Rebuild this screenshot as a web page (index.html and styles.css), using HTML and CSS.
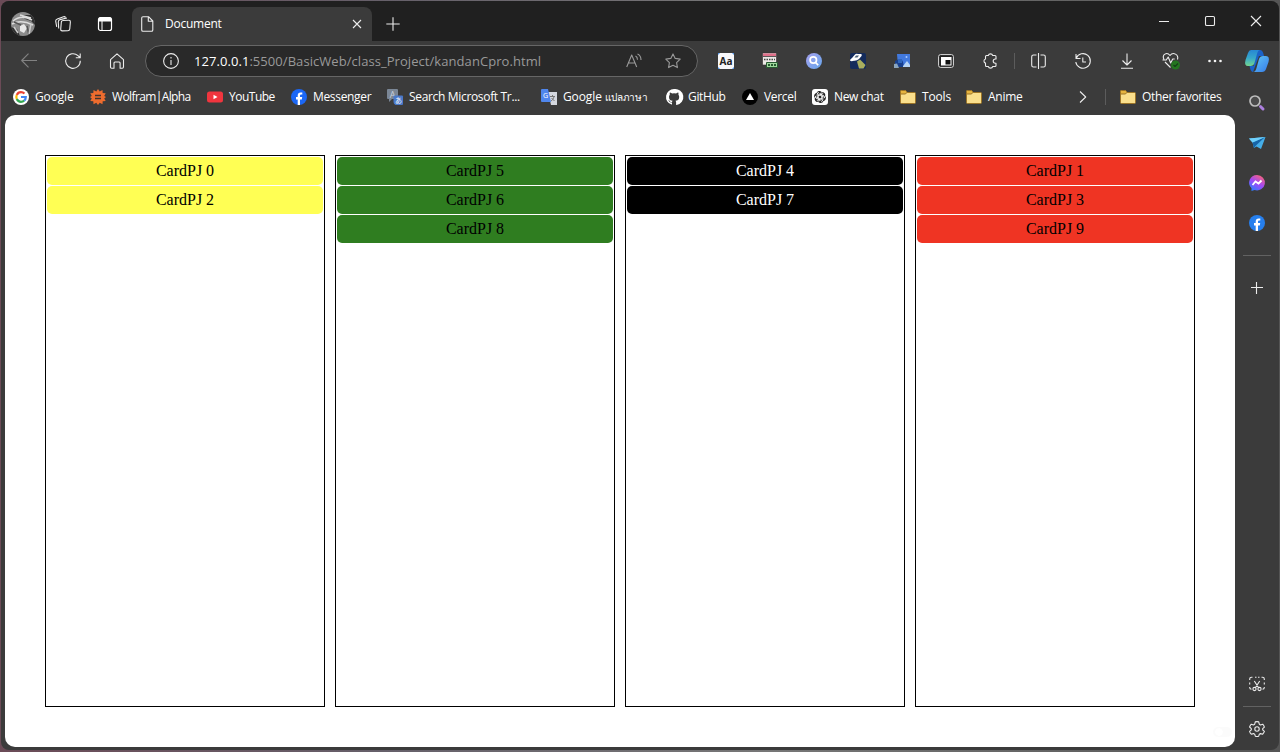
FILE: index.html
```html
<!DOCTYPE html>
<html lang="en">
<head>
<meta charset="utf-8">
<title>Document</title>
<link rel="stylesheet" href="styles.css">
</head>
<body>
<div class="window">
  <header class="titlebar">
    <svg class="avatar" viewBox="0 0 24 24"><defs><clipPath id="av"><circle cx="12" cy="12" r="12"/></clipPath></defs><g clip-path="url(#av)"><path fill="#8c8c8c" d="M0 0h24v24H0z"/><path fill="#303030" d="M13 3h11v10l-4-4-6-2-4-3zM0 15l6 2 3 7H0z"/><path stroke="#ddd" stroke-width="1.500" fill="none" d="M2 9q8-7 19-1M1 12q9-5 21 1M9 3l11 3"/><path fill="#e8e8e8" d="M9 14l4-2 3 4-3 5-4-2z"/><path stroke="#555" stroke-width="1.500" fill="none" d="M3 10l7 3M16 14l2 9"/><path stroke="#ccc" stroke-width="1.500" d="M20 12l-2 10M3 15l4 6"/></g></svg>
    <span class="tb-btn"><svg class="i16 line" viewBox="0 0 16 16"><rect x="6" y="4.500" width="9" height="10.500" rx="1.700" transform="rotate(5 11 10) skewY(-6) translate(0 1)"/><path d="M3.700 12.500L3.300 6q0-2 1.700-2.400l7-1.600M1.700 10.800L.7 5.200Q.4 3.600 2.300 2.900L8.500.7q1.500-.4 2 .7"/></svg></span>
    <span class="tb-btn"><svg class="i16" viewBox="0 0 16 16"><rect x="1.500" y="1.500" width="13" height="13" rx="2" fill="none" stroke="#fff" stroke-width="1.200"/><path fill="#fff" d="M2 1.500h12v4H2z"/><path stroke="#fff" d="M5 5v9"/></svg></span>
    <div class="tab">
      <svg class="i16 line" viewBox="0 0 16 16"><path d="M4 .7h5.500l4.300 4.300v9q0 1.300-1.300 1.300H4q-1.300 0-1.300-1.300V2Q2.700.7 4 .7zM9.300.7v4.500h4.500"/></svg>
      <span class="tab-title">Document</span>
      <svg class="tab-close line" viewBox="0 0 10 10"><path d="M1 1l8 8M9 1L1 9"/></svg>
    </div>
    <svg class="newtab line" viewBox="0 0 14 14"><path d="M7 .3v13.400M.3 7h13.400"/></svg>
    <div class="controls">
      <span><svg viewBox="0 0 12 12" class="line"><path d="M1 6.500h10"/></svg></span>
      <span><svg viewBox="0 0 12 12" class="line"><rect x="1.500" y="1.500" width="9" height="9" rx="1.300"/></svg></span>
      <span><svg viewBox="0 0 12 12" class="line"><path d="M1 1l10 10M11 1L1 11"/></svg></span>
    </div>
  </header>

  <nav class="toolbar">
    <span class="cell dim"><svg class="i16 line" viewBox="0 0 16 16"><path d="M16 7.500H.5M7.500.7L.7 7.500l6.800 6.800"/></svg></span>
    <span class="cell"><svg class="i16 line" viewBox="0 0 16 16"><path d="M15.300 7.800A7.300 7.300 0 1 1 13 2.700l2 2M15.200.5v4.300h-4.400"/></svg></span>
    <span class="cell"><svg class="i16 line" viewBox="0 0 16 16"><path d="M1.500 6.600L8 .8l6.500 5.800V14q0 1.200-1.200 1.200h-2.200V10q0-1-1-1H6q-1 0-1 1v5.200H2.700q-1.200 0-1.200-1.200z"/></svg></span>
    <div class="urlbar">
      <svg class="i16 line" viewBox="0 0 16 16"><circle cx="8" cy="8" r="7.400"/><path d="M8 7v5M8 4v1.400"/></svg>
      <span class="url"><b>127.0.0.1</b>:5500/BasicWeb/class_Project/kandanCpro.html</span>
      <svg class="i16 line read" viewBox="0 0 16 16"><path d="M.7 14L5.700 2l5 12M2.500 10h6.400M9.500 3q2 1 2 3.700M11.500 1q3.500 1.500 3.500 6"/></svg>
      <svg class="i16 line star" viewBox="0 0 16 16"><path d="M8 .9l2.200 4.500 5 .7-3.600 3.500.8 5L8 12.300l-4.400 2.300.8-5L.8 6.100l5-.7z"/></svg>
    </div>
    <span class="cell"><svg class="i16" viewBox="0 0 16 16"><path fill="#4e93e8" d="M0 0h16v16H0z"/><path fill="#f8f8fa" d="M2 0h12l2 2v12l-2 2H2l-2-2V2z"/><text class="aa" x="8" y="11.500">Aa</text></svg></span>
    <span class="cell"><svg class="i16" viewBox="0 0 16 16"><path fill="#ece9e6" stroke="#33292b" stroke-width=".6" d="M.5 0h14v12H.5z"/><path fill="#e0708a" d="M1 .5h13v2.500H1z"/><path stroke="#333" stroke-width=".8" d="M1 3.500h13"/><path stroke="#444" stroke-width="1.500" stroke-dasharray="1.500 1" d="M2 6.500h11"/><path fill="#9ed79b" stroke="#275b31" d="M4.500 9.500h11v5h-11z"/><path stroke="#275b31" stroke-dasharray="2 1" stroke-width="2" d="M6 12h8"/></svg></span>
    <span class="cell"><svg class="i16" viewBox="0 0 16 16"><defs><linearGradient id="q" x2="1" y2="1"><stop stop-color="#a6a0ee"/><stop offset="1" stop-color="#66a6ec"/></linearGradient></defs><circle cx="8" cy="8" r="8" fill="url(#q)"/><circle cx="7.300" cy="7" r="3.200" fill="none" stroke="#fff" stroke-width="1.700"/><path stroke="#fff" stroke-width="1.700" d="M9.500 9.500l2.700 2.700"/></svg></span>
    <span class="cell"><svg class="i16" viewBox="0 0 16 16"><rect width="16" height="16" rx="2" fill="#142b5c"/><path fill="#a9ae5d" d="M7 8.500l3-2L15.500 12l-2 3.500H9z"/><path fill="#fff" d="M0 7.500q0-1.500 2-2.500l3-3.500Q6 .5 8 1h3q1.500.5.5 2L9 6Q7 8 4 7.800q-3 1-4-.3z"/><path fill="#51647b" d="M6 2.500h3l-1.500 2h-3z"/></svg></span>
    <span class="cell"><svg class="i16" viewBox="0 0 16 16"><path fill="#4279dd" d="M3 1h13v13H4z"/><path fill="#173f8e" d="M1 8l4-2 3 1 1 2 1 5H1z"/><path fill="#2d66bd" d="M4 6h4v4H4z"/><path fill="#b6d4f5" d="M9 13l4-5 3 4v2H9z"/><circle cx="12.500" cy="4" r="1" fill="#a9caff"/><path fill="#8ba5bd" d="M0 11l3-.5 2 4.500H0z"/></svg></span>
    <span class="cell"><svg class="i16" viewBox="0 0 16 16"><rect x=".6" y="1.600" width="14.800" height="12.800" rx="2" fill="#222" stroke="#ddd"/><path fill="#fff" d="M3 4h10.500v8.500H3z"/><path fill="#111" d="M7.500 7h5v4.500h-5z"/></svg></span>
    <span class="cell"><svg class="i16 line" viewBox="0 0 16 16"><path d="M4.500 2.500H6.300a2.300 2.300 0 0 1 4.400 0H13q1 0 1 1V6h-.7a2.100 2.100 0 0 0 0 4.200h.7v2.300q0 1-1 1h-2.300a2.300 2.300 0 0 1-4.400 0H4.500q-1 0-1-1v-2.400a2.200 2.200 0 0 1 0-4.200V3.500q0-1 1-1"/></svg></span>
    <i class="sep"></i>
    <span class="cell"><svg class="i16 line" viewBox="0 0 16 16"><path d="M5.500 2H2.500Q.7 2 .7 3.800v8.400Q.7 14 2.500 14h3M9.500 2h3q1.800 0 1.800 1.800v8.400q0 1.800-1.800 1.800h-3M7.500 0v16"/></svg></span>
    <span class="cell"><svg class="i16 line" viewBox="0 0 16 16"><path d="M1 1v4.500h4.500M1.200 5.300A7.300 7.300 0 1 1 .8 9M7.800 4.500V9H11"/></svg></span>
    <span class="cell"><svg class="i16 line" viewBox="0 0 16 16"><path d="M8 .5v11.300M3.500 7.500L8 12l4.500-4.500M2 15.300h12"/></svg></span>
    <span class="cell"><svg class="health line" viewBox="0 0 18 18"><path d="M2 7.500C-.5 2.500 5-.5 8 3.500c3-4 9-1 7.500 4M.5 8h3.700l2-3 2.500 6 2-4h2M3 10l5.500 5.500"/><circle class="ok" cx="13.500" cy="13" r="4.500"/><path class="tick" d="M11.500 13l1.500 1.500 3-3"/></svg></span>
    <span class="cell"><svg class="i16" viewBox="0 0 16 16" fill="#f4f4f4"><circle cx="2.500" cy="8" r="1.300"/><circle cx="8" cy="8" r="1.300"/><circle cx="13.500" cy="8" r="1.300"/></svg></span>
    <span class="copilot"><svg viewBox="0 0 24 22"><defs><linearGradient id="c1" x2="0" y2="1"><stop stop-color="#2787d3"/><stop offset=".5" stop-color="#36a7cb"/><stop offset="1" stop-color="#73d68f"/></linearGradient><linearGradient id="c2" x2="1" y2="1"><stop stop-color="#61c8f4"/><stop offset="1" stop-color="#367be9"/></linearGradient></defs><path fill="#1b62c7" d="M12 0h3q2.500 0 3.500 4l.5 2h-5L8 22q-2 0-3-4l-.5-2h4z"/><path fill="url(#c1)" d="M6 0h9q-2 0-3 4L9.500 13q-1 3-4 3H3q-4 0-2.500-6L3 3q1-3 3-3z"/><path fill="url(#c2)" d="M18 6h3q4 0 2.500 6L21 19q-1 3-4 3H8q2.500 0 3.500-4L14 9q1-3 4-3z"/></svg></span>
  </nav>

  <div class="body">
    <div class="left">
      <div class="bookmarks">
        <span class="bm w1"><svg class="i16" viewBox="0 0 16 16"><circle cx="8" cy="8" r="8" fill="#fff"/><g fill="none" stroke-width="2.200"><path stroke="#ea4335" d="M3.800 6Q5 3.200 8 3.200q2 0 3.500 1.300"/><path stroke="#fbbc05" d="M3.800 10q-1-2 0-4"/><path stroke="#34a853" d="M3.800 10q1.200 2.800 4.200 2.800 1.800 0 3.200-1.200"/><path stroke="#4285f4" d="M8 8h4.800q0 2.300-1.600 3.600"/></g></svg><em>Google</em></span>
        <span class="bm w2"><svg class="i16" viewBox="0 0 16 16"><path fill="#ee6c2e" d="M8 0l1.700 2.500L12.500 1l.2 3 3 .2L14.200 7 16 8l-1.800 1.500 1.500 2.500-3 .2-.2 3-2.800-1.500L8 16l-1.700-2.300-2.800 1.500-.2-3-3-.2 1.500-2.500L0 8l1.800-1L.3 4.200l3-.2.2-3 2.800 1.500z"/><path stroke="#44332c" stroke-width="1.300" d="M5 6.500h6M5 9.500h6"/></svg><em>Wolfram|Alpha</em></span>
        <span class="bm w3"><svg class="i16" viewBox="0 0 16 16"><rect y="2.500" width="16" height="11" rx="2.500" fill="#f0353e"/><path fill="#fff" d="M6.500 5.700l4 2.300-4 2.300z"/></svg><em>YouTube</em></span>
        <span class="bm w4"><svg class="i16" viewBox="0 0 16 16"><circle cx="8" cy="8" r="8" fill="#1b67f5"/><path fill="#fff" d="M6.700 16v-5.500H5V8h1.700V6.500q0-3 3-3h1.600v2H10q-1 0-1 1V8h2.200l-.4 2.500H9V16z"/></svg><em>Messenger</em></span>
        <span class="bm w5"><svg class="i16" viewBox="0 0 16 16"><path fill="#7b8796" d="M1 0h9q1 0 1 1v8q0 1-1 1H5l-3 3v-3H1q-1 0-1-1V1q0-1 1-1z"/><text class="glyph big" x="5.500" y="8.500">A</text><path fill="#4a79c9" d="M7.500 6.500H15q1 0 1 1V15q0 1-1 1H8.500q-2-1-2-3v-5q0-1.500 1-1.500z"/><text class="glyph" x="11.500" y="14">あ</text></svg><em>Search Microsoft Tr...</em></span>
        <span class="bm w6"><svg class="i16" viewBox="0 0 16 16"><path fill="#d5d8df" d="M7 3h9v13H10z"/><path fill="#4f86ec" d="M1 0h6l3 13H1Q0 13 0 12V1q0-1 1-1z"/><text class="glyph" x="4.500" y="9">G</text><path stroke="#777" fill="none" d="M9 7.500h5M11.500 6v1.500M13 8q-1 3-3 4M10.500 9l3 3"/></svg><em>Google <span class="thai">แปลภาษา</span></em></span>
        <span class="bm w7"><svg class="i16" viewBox="0 0 16 16"><path fill="#fff" d="M8 0a8 8 0 0 0-2.500 15.600q.5 0 .5-.5v-1.600c-2 .4-2.700-.6-3-1.400-.2-.4-.5-.7-.9-1 1-.2 1.600.9 2 1.300.6.8 1.500.7 2 .4q.1-.7.5-1c-2-.3-3.600-1-3.600-3.900q0-1.300.8-2.200-.3-1 .1-2.100 1 0 2.200.9a8 8 0 0 1 4 0q1.200-.9 2.200-.9.400 1.200.1 2.100.8.9.8 2.200c0 2.900-1.700 3.600-3.700 3.900q.6.500.6 1.500v2.100q0 .5.500.5A8 8 0 0 0 8 0z"/></svg><em>GitHub</em></span>
        <span class="bm w8"><svg class="i16" viewBox="0 0 16 16"><circle cx="8" cy="8" r="8" fill="#000"/><path fill="#fff" d="M8 4l4 7H4z"/></svg><em>Vercel</em></span>
        <span class="bm w9"><svg class="i16" viewBox="0 0 16 16"><rect width="16" height="16" rx="3" fill="#fff"/><g transform="translate(2 2) scale(.5)"><path fill="#222" d="M22.280 9.820a5.980 5.980 0 0 0-.52-4.910 6.050 6.050 0 0 0-6.510-2.900A6.070 6.070 0 0 0 4.980 4.180a5.980 5.980 0 0 0-4 2.900 6.050 6.050 0 0 0 .74 7.100 5.980 5.980 0 0 0 .51 4.910 6.050 6.050 0 0 0 6.510 2.900A5.980 5.980 0 0 0 13.260 24a6.060 6.060 0 0 0 5.770-4.210 5.990 5.990 0 0 0 4-2.900 6.060 6.060 0 0 0-.75-7.070z"/><g fill="none" stroke="#fff" stroke-width="1.800"><path id="petal" d="M8.500 14V7.500l5-3q3-1.400 5 1"/><use href="#petal" transform="rotate(60 12 12)"/><use href="#petal" transform="rotate(120 12 12)"/><use href="#petal" transform="rotate(180 12 12)"/><use href="#petal" transform="rotate(240 12 12)"/><use href="#petal" transform="rotate(300 12 12)"/></g></g></svg><em>New chat</em></span>
        <span class="bm w10"><svg class="i16" viewBox="0 0 16 16"><path id="folder" fill="#fadf8c" stroke="#9c7426" d="M.5 2.500q0-1 1-1h4l2 2h7q1 0 1 1v9q0 1-1 1h-13q-1 0-1-1z"/><path fill="#e6b43f" stroke="#9c7426" d="M.5 5V2.500q0-1 1-1h4l1.500 1.700L5.500 5z"/></svg><em>Tools</em></span>
        <span class="bm w11"><svg class="i16" viewBox="0 0 16 16"><use href="#folder"/><path fill="#e6b43f" stroke="#9c7426" d="M.5 5V2.500q0-1 1-1h4l1.500 1.700L5.500 5z"/></svg><em>Anime</em></span>
        <svg class="chev line" viewBox="0 0 8 12"><path d="M1 .5L6.700 6 1 11.500"/></svg>
        <i class="bmsep"></i>
        <span class="bm w12"><svg class="i16" viewBox="0 0 16 16"><use href="#folder"/><path fill="#e6b43f" stroke="#9c7426" d="M.5 5V2.500q0-1 1-1h4l1.500 1.700L5.500 5z"/></svg><em>Other favorites</em></span>
      </div>
      <main class="page">
        <section class="column yellow"><div class="card">CardPJ 0</div><div class="card">CardPJ 2</div></section>
        <section class="column green"><div class="card">CardPJ 5</div><div class="card">CardPJ 6</div><div class="card">CardPJ 8</div></section>
        <section class="column black"><div class="card">CardPJ 4</div><div class="card">CardPJ 7</div></section>
        <section class="column red"><div class="card">CardPJ 1</div><div class="card">CardPJ 3</div><div class="card">CardPJ 9</div></section>
        <i class="toggle"></i>
      </main>
    </div>
    <aside class="sidebar">
      <span><svg class="i16" viewBox="0 0 16 16"><circle cx="6" cy="6" r="5" fill="#4b4b4b" stroke="#bdbdbd" stroke-width="1.700"/><path stroke="#ad80df" stroke-width="3" stroke-linecap="round" d="M11.500 11.500l2.500 2.500"/></svg></span>
      <span><svg class="i16" viewBox="0 0 16 16"><path fill="#45aee8" d="M0 3.500L16.500 2 12 14 7.500 11.500 5 13 3.500 7.500z"/><path fill="#1664a8" d="M3.500 7.500L16 2 7 10.500 5 13z"/><path fill="#6fd0fb" d="M0 3.500L16 2 3.500 7.500z"/></svg></span>
      <span><svg class="i16" viewBox="0 0 16 16"><defs><linearGradient id="m" x1=".2" y1="1" x2=".8" y2="0"><stop stop-color="#287eff"/><stop offset=".5" stop-color="#a149f6"/><stop offset="1" stop-color="#ff6572"/></linearGradient></defs><path fill="url(#m)" d="M8 0a7.900 7.700 0 1 1-2.500 15L2.500 16v-2.800A7.900 7.700 0 0 1 8 0z"/><path fill="none" stroke="#fff" stroke-width="1.800" d="M3.500 10L6.500 6.500l3 2L12.500 5.500"/></svg></span>
      <span><svg class="i16" viewBox="0 0 16 16"><circle cx="8" cy="8" r="8" fill="#267fed"/><path fill="#fff" d="M6.700 16v-5.500H5V8h1.700V6.500q0-3 3-3h1.600v2H10q-1 0-1 1V8h2.200l-.4 2.500H9V16z"/></svg></span>
      <i class="rule first"></i>
      <span class="add"><svg class="line" viewBox="0 0 12 12"><path d="M5.500 0v12M0 5.500h12"/></svg></span>
      <span class="snip"><svg class="i16 line" viewBox="0 0 16 16"><path d="M.7 4V3q0-1.800 1.800-1.800h1M6 1.200h1.500M9 1.200h1.500M12.500 1.200h1q1.800 0 1.800 1.800v1M.7 6.500v2M15.300 6.500v2M.7 11v.5q0 1.700 1.800 1.700M15.300 11v.5q0 1.700-1.800 1.700M5.300 5l4.500 7M10.700 5l-4.500 7"/><circle cx="5.500" cy="13" r="1.600"/><circle cx="10.500" cy="13" r="1.600"/></svg></span>
      <i class="rule"></i>
      <span class="gear"><svg class="i16 line" viewBox="0 0 16 16"><path d="M6.300.9Q8 .4 9.700.9l.6 2.300 1.200.7 2.200-.7q1.200 1.200 1.700 2.900L13.700 7.700v1.200l1.700 1.500q-.5 1.500-1.700 2.800l-2.200-.6-1.200.7-.6 1.900q-1.700.5-3.400 0l-.6-2-1.200-.6-2.200.6Q1.100 12 .6 10.300l1.700-1.500V7.600L.6 6Q1.100 4.400 2.300 3.200l2.200.7 1.200-.7z"/><circle cx="8" cy="8" r="2.200"/></svg></span>
    </aside>
  </div>
</div>
</body>
</html>
```

FILE: styles.css
```css
* { box-sizing: border-box; }
body {
  margin: 0;
  height: 752px;
  padding: 1px 1px 2px;
  overflow: hidden;
  background: linear-gradient(90deg, #6b4b57, #66606a 30%, #777 60%, #555);
  font-family: "Open Sans", "Noto Sans", sans-serif;
  font-size: 12px;
  color: #fff;
}
svg { display: block; flex: none; overflow: visible; }
.i16 { width: 16px; height: 16px; }
.line { fill: none; stroke: #ececec; stroke-width: 1.1; stroke-linejoin: round; }
.window {
  height: 749px;
  display: flex;
  flex-direction: column;
  background: #3b3b3b;
  border-radius: 8px;
  overflow: hidden;
}
.titlebar { height: 40px; flex: none; display: flex; align-items: center; background: #202020; padding: 6px 0 0 10px; }
.avatar { width: 24px; height: 24px; margin-right: 7px; }
.tb-btn { width: 42px; display: flex; justify-content: center; }
.tab {
  width: 240px; height: 34px; margin-left: 6px; padding: 0 10px 0 7px;
  display: flex; align-items: center;
  background: #3b3b3b; border-radius: 8px 8px 0 0;
}
.tab-title { margin: -2px 0 0 10px; flex: 1; letter-spacing: -.25px; }
.tab-close { width: 10px; height: 10px; }
.newtab { width: 14px; height: 14px; margin-left: 14px; }
.controls { margin-left: auto; display: flex; align-self: flex-start; }
.controls span { width: 46px; height: 28px; display: flex; align-items: center; justify-content: center; }
.controls svg { width: 12px; height: 12px; }

.toolbar { height: 40px; flex: none; display: flex; align-items: center; padding-left: 6px; }
.cell { width: 44px; flex: none; display: flex; justify-content: center; }
.dim { opacity: .4; }
.urlbar {
  width: 553px; height: 32px; margin: 0 6px; padding: 0 16px 0 17px; flex: none;
  display: flex; align-items: center;
  border: 1px solid #666; border-radius: 16px; background: #292929;
}
.url { margin-left: 15px; flex: 1; font-size: 13px; color: #999; white-space: nowrap; letter-spacing: .06px; }
.url b { font-weight: 400; color: #fff; }
.read, .star { stroke: #999; }
.read { margin-right: 23px; }
.aa { font: 700 10px "Open Sans", sans-serif; fill: #222; text-anchor: middle; }
.glyph { font: 7px "Open Sans", "Noto Sans CJK JP", sans-serif; fill: #fff; text-anchor: middle; }
.big { font-size: 9px; fill: #c5cfdd; }
.sep { width: 1px; height: 16px; margin: 0 2px; background: #5c5c5c; }
.health { width: 18px; height: 18px; }
.health .ok { fill: #247520; stroke: none; }
.health .tick { stroke: #163f18; }
.copilot { width: 40px; display: flex; justify-content: center; }
.copilot svg { width: 24px; height: 22px; }

.body { flex: 1; display: flex; min-height: 0; }
.left { width: 1234px; padding: 0 0 3px 4px; display: flex; flex-direction: column; }
.bookmarks { height: 34px; flex: none; display: flex; align-items: center; padding: 0 0 2px 8px; }
.bm { display: flex; align-items: center; gap: 6px; width: 77px; flex: none; white-space: nowrap; }
.bm em { font-style: normal; letter-spacing: -.33px; margin-top: -1px; }
.w2 { width: 117px; } .w3 { width: 84px; } .w4 { width: 96px; }
.w5 { width: 154px; } .w6 { width: 125px; } .w7 { width: 76px; }
.w8 { width: 70px; } .w9 { width: 88px; } .w10 { width: 66px; }
.w11 { width: 113px; } .w12 { width: 110px; }
.w1 em, .w10 em { letter-spacing: -.15px; }
.w2 em { letter-spacing: -.62px; }
.w3 em { letter-spacing: -.5px; }
.w6 em { letter-spacing: -.1px; }
.w11 em { letter-spacing: -.25px; }
.thai { font-size: 10px; }
.chev { width: 8px; height: 12px; }
.bmsep { width: 1px; height: 16px; margin: 0 14px 0 18px; background: #5c5c5c; }

.page {
  position: relative;
  flex: 1; padding: 40px; display: flex; gap: 10px;
  background: #fff; border-radius: 10px;
  font: 16px/18px "Liberation Serif", serif; color: #000; text-align: center;
}
.column { flex: 1; border: 1px solid #000; padding: 1px; display: flex; flex-direction: column; gap: 1px; }
.card { padding: 5px; border-radius: 5px; }
.yellow .card { background: #ffff54; }
.green .card { background: #2f7d20; }
.black .card { background: #000; color: #fff; }
.red .card { background: #ef3423; }
.toggle { position: absolute; right: 3px; bottom: 10px; width: 19px; height: 10px; border-radius: 5px; background: radial-gradient(circle at 6px 5px, #fff 3.5px, #fbfbfb 4px); }

.sidebar { width: 44px; display: flex; flex-direction: column; align-items: center; padding-top: 2px; }
.sidebar span { height: 40px; display: flex; align-items: center; }
.rule { width: 28px; height: 1px; flex: none; background: #626262; }
.first { margin: 12px 0; }
.add svg { width: 12px; height: 12px; }
.sidebar .snip { margin-top: auto; height: 44px; }
.sidebar .gear { height: 43px; }
```
